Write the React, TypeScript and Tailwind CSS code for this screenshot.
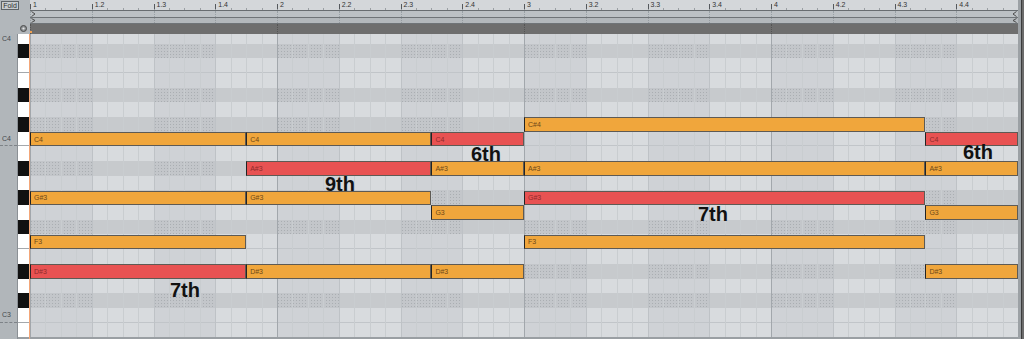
import React from 'react';

const BEAT = 61.75;
const ROW = 14.7;
const FIRST = 9.5;

const ROWS = ['G4', 'F#4', 'F4', 'E4', 'D#4', 'D4', 'C#4', 'C4', 'B3', 'A#3', 'A3', 'G#3', 'G3', 'F#3', 'F3', 'E3', 'D#3', 'D3', 'C#3', 'C3', 'B2'];

const rowTop = (i: number) => (i === 0 ? 0 : FIRST + (i - 1) * ROW);
const isBlack = (n: string) => n.includes('#');
// rows whose bottom edge meets another white key
const whiteSplit = (n: string) => n.startsWith('C') && !isBlack(n) || n.startsWith('F') && !isBlack(n);

type Note = { p: string; s: number; e: number; hot?: boolean };

const NOTES: Note[] = [
  { p: 'C#4', s: 8, e: 14.5 },
  { p: 'C4', s: 0, e: 3.5 },
  { p: 'C4', s: 3.5, e: 6.5 },
  { p: 'C4', s: 6.5, e: 8, hot: true },
  { p: 'C4', s: 14.5, e: 16, hot: true },
  { p: 'A#3', s: 3.5, e: 6.5, hot: true },
  { p: 'A#3', s: 6.5, e: 8 },
  { p: 'A#3', s: 8, e: 14.5 },
  { p: 'A#3', s: 14.5, e: 16 },
  { p: 'G#3', s: 0, e: 3.5 },
  { p: 'G#3', s: 3.5, e: 6.5 },
  { p: 'G#3', s: 8, e: 14.5, hot: true },
  { p: 'G3', s: 6.5, e: 8 },
  { p: 'G3', s: 14.5, e: 16 },
  { p: 'F3', s: 0, e: 3.5 },
  { p: 'F3', s: 8, e: 14.5 },
  { p: 'D#3', s: 0, e: 3.5, hot: true },
  { p: 'D#3', s: 3.5, e: 6.5 },
  { p: 'D#3', s: 6.5, e: 8 },
  { p: 'D#3', s: 14.5, e: 16 },
];

// interval callouts, in grid coordinates
const CALLOUTS = [
  { t: '6th', x: 441, y: 109.5 },
  { t: '6th', x: 933, y: 108 },
  { t: '9th', x: 295, y: 139.5 },
  { t: '7th', x: 668, y: 169.5 },
  { t: '7th', x: 140, y: 246 },
];

const beatLabel = (b: number) => (b % 4 === 0 ? `${b / 4 + 1}` : `${Math.floor(b / 4) + 1}.${(b % 4) + 1}`);

function Header() {
  return (
    <div className="flex h-[34px] shrink-0">
      {/* left corner */}
      <div className="flex w-[30px] flex-col justify-between bg-[#b2b7bb] p-[1px]">
        <div className="flex h-[9px] w-[18px] items-center justify-center border border-[#5e6367] bg-[#c7cbce] text-[7px] leading-none text-[#2e2e2e]">
          Fold
        </div>
        <svg className="mb-[1px] mr-[2px] self-end" width="7" height="7" viewBox="0 0 7 7">
          <circle cx="3.5" cy="3.5" r="3" fill="#8e9295" stroke="#4a4a4a" strokeWidth="1" />
          <circle cx="3.5" cy="3.5" r="1.1" fill="#e6e6e6" />
        </svg>
      </div>

      <div className="flex w-[988px] flex-col">
        {/* ruler */}
        <div className="relative h-[10px] bg-[#d4d7da]">
          <div className="absolute inset-x-0 bottom-0 flex h-[2px]">
            {Array.from({ length: 64 }).map((_, i) => (
              <div key={i} className="flex-1 border-l border-[#9a9fa3]" />
            ))}
          </div>
          {Array.from({ length: 16 }).map((_, b) => (
            <div key={b} className="absolute top-0 flex h-[10px]" style={{ left: b * BEAT }}>
              <div className="mt-[4px] h-[5px] w-[1px] bg-[#55595d]" />
              <span className="ml-[2px] mt-[1px] text-[7px] leading-none text-[#333]">{beatLabel(b)}</span>
            </div>
          ))}
        </div>

        {/* loop strips */}
        <div className="relative h-[7px] border-t border-[#686d71] bg-[#bcc1c5]">
          <div className="absolute inset-0 flex">
            {Array.from({ length: 16 }).map((_, b) => (
              <div key={b} className="flex-1 border-l border-dotted border-[#98a0a5]" />
            ))}
          </div>
          <svg className="absolute left-[1px] top-[0px]" width="5" height="6" viewBox="0 0 5 6">
            <polyline points="0.5,0.5 4,3 0.5,5.5" fill="none" stroke="#4c4c4c" strokeWidth="1" />
          </svg>
          <svg className="absolute right-[1px] top-[0px]" width="5" height="6" viewBox="0 0 5 6">
            <polyline points="4.5,0.5 1,3 4.5,5.5" fill="none" stroke="#4c4c4c" strokeWidth="1" />
          </svg>
        </div>
        <div className="relative h-[7px] border-y border-[#6f7478] bg-[#b3b8bc]">
          <div className="absolute inset-0 flex">
            {Array.from({ length: 16 }).map((_, b) => (
              <div key={b} className="flex-1 border-l border-dotted border-[#959ba0]" />
            ))}
          </div>
          <svg className="absolute left-[1px] top-[0px]" width="5" height="5" viewBox="0 0 5 5">
            <polyline points="0.5,0.5 4,2.5 0.5,4.5" fill="none" stroke="#4c4c4c" strokeWidth="1" />
          </svg>
          <svg className="absolute right-[1px] top-[0px]" width="5" height="5" viewBox="0 0 5 5">
            <polyline points="4.5,0.5 1,2.5 4.5,4.5" fill="none" stroke="#4c4c4c" strokeWidth="1" />
          </svg>
        </div>

        {/* clip bar */}
        <div className="relative flex h-[10px] bg-[#6e6e6e]">
          {Array.from({ length: 4 }).map((_, b) => (
            <div key={b} className="flex-1 border-l border-dotted border-[#545454]" />
          ))}
          <div className="absolute bottom-[1px] left-[0px] h-[2px] w-[2px] bg-[#f0a050]" />
        </div>
      </div>
    </div>
  );
}

function cellClass(black: boolean, odd: boolean) {
  if (black && odd)
    return 'bg-[#c3c6ca] bg-[radial-gradient(circle,#aaaeb2_0.55px,transparent_0.9px)] bg-[length:3px_3px]';
  if (black) return 'bg-[#c7cacd]';
  if (odd) return 'bg-[#cfd2d6]';
  return 'bg-[#d8dbde]';
}

function Body() {
  return (
    <div className="flex flex-1 items-start">
      {/* octave labels */}
      <div className="flex w-[18px] flex-col self-stretch border-r border-[#8b9095] bg-[#b1b6ba]">
        {ROWS.map((r, i) => (
          <div
            key={r}
            className={`flex overflow-hidden pl-[2px] text-[7px] leading-none text-[#454a4e] ${i === 0 ? 'h-[9.5px] items-start pt-[1px]' : 'h-[14.7px] items-center'} ${
              r === 'C4' || r === 'C3' ? 'border-b border-dashed border-[#7d8287]' : ''
            }`}
          >
            {i === 0 && 'C4'}
            {(r === 'C4' || r === 'C3') && r}
          </div>
        ))}
      </div>

      {/* keyboard */}
      <div className="flex w-[11px] flex-col">
        {ROWS.map((r, i) => (
          <div
            key={r}
            className={`${i === 0 ? 'h-[9.5px]' : 'h-[14.7px]'} ${isBlack(r) ? 'bg-[#111111]' : 'bg-white'} ${
              whiteSplit(r) ? 'border-b border-[#a4a8ac]' : ''
            }`}
          />
        ))}
      </div>
      <div className="w-[1px] self-stretch bg-[#f3a678]" />

      {/* note grid */}
      <div className="relative w-[988px]">
        {ROWS.map((r, i) => (
          <div
            key={r}
            className={`flex ${i === 0 ? 'h-[9.5px]' : 'h-[14.7px]'} ${whiteSplit(r) ? 'border-b border-[#c1c5c9]' : ''}`}
          >
            {Array.from({ length: 16 }).map((_, b) => (
              <div key={b} className={`flex-1 ${cellClass(isBlack(r), b % 2 === 0)}`} />
            ))}
          </div>
        ))}

        <div className="pointer-events-none absolute inset-0 flex">
          {Array.from({ length: 64 }).map((_, i) => (
            <div
              key={i}
              className={`flex-1 border-l ${
                i % 16 === 0 ? 'border-[#a2a7ac]' : i % 4 === 0 ? 'border-[#bec2c6]' : 'border-[#c9cdd0]'
              }`}
            />
          ))}
        </div>

        {NOTES.map((n, k) => (
          <div
            key={k}
            className={`absolute flex items-center border border-[#5e5a54] border-l-[#232323] pl-[3px] text-[7px] leading-none ${
              n.hot ? 'bg-[#e85252] text-[#8e2c2c]' : 'bg-[#f0a63c] text-[#6d4818]'
            }`}
            style={{ left: n.s * BEAT, width: (n.e - n.s) * BEAT, top: rowTop(ROWS.indexOf(n.p)), height: ROW }}
          >
            {n.p}
          </div>
        ))}

        {CALLOUTS.map((c, k) => (
          <div
            key={k}
            className="absolute text-[20px] font-bold leading-none text-[#121212]"
            style={{ left: c.x, top: c.y }}
          >
            {c.t}
          </div>
        ))}
      </div>
    </div>
  );
}

export default function App() {
  return (
    <div className="flex h-[339px] w-[1024px] overflow-hidden bg-[#9a9fa3] font-['Liberation_Sans',Arial,sans-serif]">
      <div className="flex w-[1018px] flex-col">
        <Header />
        <Body />
      </div>
      <div className="flex w-[6px]">
        <div className="w-[3px] bg-[#9ca1a5]" />
        <div className="w-[1px] bg-[#3c3c3c]" />
        <div className="w-[2px] bg-[#6b6b6b]" />
      </div>
    </div>
  );
}
